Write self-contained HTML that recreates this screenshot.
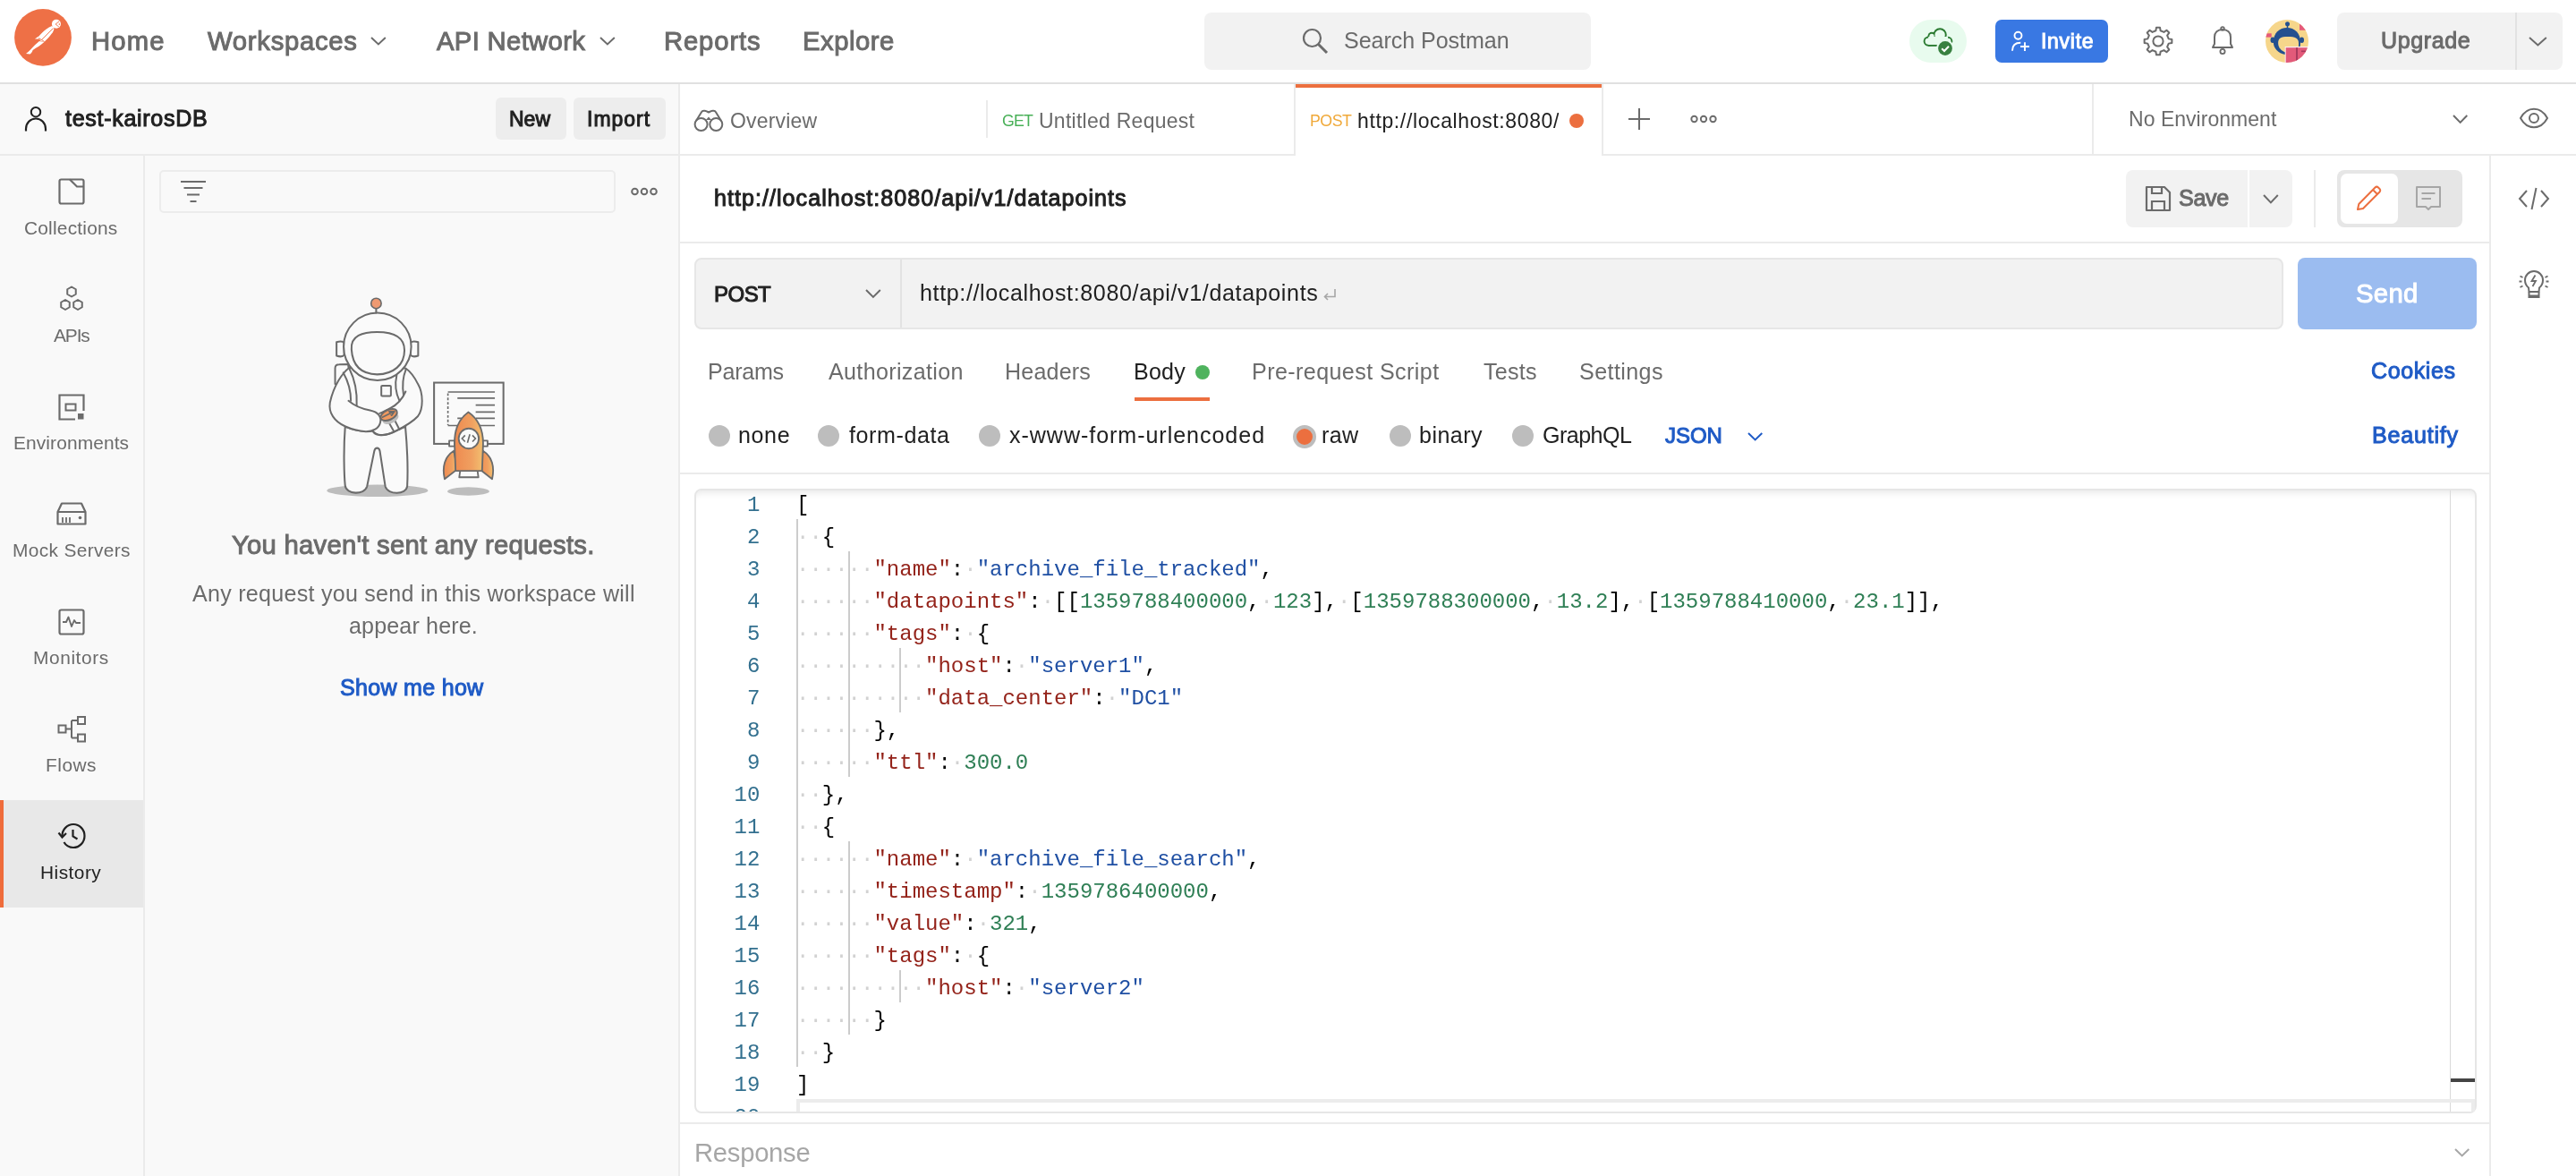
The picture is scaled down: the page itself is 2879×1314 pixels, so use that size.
<!DOCTYPE html><html><head><meta charset="utf-8"><style>
*{margin:0;padding:0;box-sizing:content-box}
html,body{width:2879px;height:1314px;overflow:hidden;background:#fff}
body{position:relative;font-family:'Liberation Sans',sans-serif}
body>div,body>span,body>svg{position:absolute}
div>div,div>span{position:absolute}
.t{position:absolute;white-space:pre;line-height:1;will-change:transform}
.ln{will-change:transform;left:0;width:71.4px;text-align:right;font-family:'Liberation Mono',monospace;font-size:24px;line-height:36px;color:#33708f;white-space:pre}
.cl{will-change:transform;left:112px;font-family:'Liberation Mono',monospace;font-size:24px;line-height:36px;white-space:pre;color:#000}
.cl span{position:static}
.ws{color:#d2d2d2}
.k{color:#94231a}
.s{color:#1f4fa3}
.n{color:#2f7f55}
.p{color:#000}
</style></head><body><div style="left:0px;top:0px;width:2879px;height:92px;background:#ffffff;"></div>
<div style="left:0px;top:92px;width:2879px;height:2px;background:#e0e0e0;"></div>
<div style="left:0px;top:94px;width:758px;height:1220px;background:#f9f9f9;"></div>
<div style="left:758px;top:94px;width:2px;height:1220px;background:#ebebeb;"></div>
<div style="left:0px;top:172px;width:758px;height:2px;background:#ebebeb;"></div>
<div style="left:160px;top:174px;width:2px;height:1140px;background:#ebebeb;"></div>
<div style="left:0px;top:894px;width:160px;height:120px;background:#e8e8e8;"></div>
<div style="left:0px;top:894px;width:4px;height:120px;background:#ef6c3b;"></div>
<svg style="left:12px;top:6px;" width="72" height="72" viewBox="0 0 1176 1176" fill="none"><circle cx="588" cy="586" r="521" fill="#ee7046"/>
<g fill="#fff">
<circle cx="832" cy="338" r="82"/>
<path d="M500 578 C560 505 655 415 728 386 C770 370 798 398 788 442 C772 505 690 592 612 668 L545 650 Z"/>
<path d="M522 655 L610 670 C560 722 470 772 402 815 C392 850 372 878 352 890 L278 882 C330 842 392 772 442 722 Z"/>
<path d="M440 612 L503 568 L526 612 Z"/>
</g>
<g stroke="#ee7046" stroke-width="15" fill="none">
<path d="M775 418 L552 640"/>
<path d="M508 596 L615 662"/>
<path d="M885 292 L818 343 L880 393"/>
</g>
<circle cx="888" cy="345" r="13" fill="#ee7046"/></svg>
<span class="t" style="left:102.4px;top:32px;font-size:29.26px;font-weight:400;color:#6b6b6b;letter-spacing:1.133px;-webkit-text-stroke:1.0px #6b6b6b;">Home</span>
<span class="t" style="left:232px;top:32px;font-size:29.26px;font-weight:400;color:#6b6b6b;letter-spacing:0.733px;-webkit-text-stroke:1.0px #6b6b6b;">Workspaces</span>
<span class="t" style="left:487.7px;top:32px;font-size:29.26px;font-weight:400;color:#6b6b6b;letter-spacing:0.33px;-webkit-text-stroke:1.0px #6b6b6b;">API Network</span>
<span class="t" style="left:741.8px;top:32px;font-size:29.26px;font-weight:400;color:#6b6b6b;letter-spacing:0.867px;-webkit-text-stroke:1.0px #6b6b6b;">Reports</span>
<span class="t" style="left:896.8px;top:32px;font-size:29.26px;font-weight:400;color:#6b6b6b;letter-spacing:0.517px;-webkit-text-stroke:1.0px #6b6b6b;">Explore</span>
<svg style="left:413.1px;top:40.199999999999996px;" width="19.8" height="11.4" viewBox="0 0 19.8 11.4" fill="none"><path d="M2 2 L9.9 9.4 L17.8 2" stroke="#6b6b6b" stroke-width="2" fill="none"/></svg>
<svg style="left:668.6px;top:40.199999999999996px;" width="19.8" height="11.4" viewBox="0 0 19.8 11.4" fill="none"><path d="M2 2 L9.9 9.4 L17.8 2" stroke="#6b6b6b" stroke-width="2" fill="none"/></svg>
<div style="left:1346px;top:14px;width:432px;height:64px;background:#f2f2f2;border-radius:8px;"></div>
<svg style="left:1454px;top:30px;" width="32" height="32" viewBox="0 0 32 32" fill="none"><circle cx="12.5" cy="12.5" r="9.5" stroke="#6b6b6b" stroke-width="2.2"/><path d="M19.5 19.5 L29 29" stroke="#6b6b6b" stroke-width="3" stroke-linecap="butt"/></svg>
<span class="t" style="left:1501.7px;top:33px;font-size:25.08px;font-weight:400;color:#6b6b6b;letter-spacing:-0.054px;">Search Postman</span>
<div style="left:2134px;top:22px;width:64px;height:48px;background:#e8fbee;border-radius:24px;"></div>
<svg style="left:2146px;top:28px;" width="42" height="40" viewBox="0 0 42 40" fill="none"><g fill="#2a7a30"><circle cx="9.2" cy="18.1" r="5.55"/><circle cx="13" cy="12.4" r="4.55"/><circle cx="22.1" cy="11" r="7.65"/><circle cx="31.1" cy="18.1" r="5.25"/><rect x="9.2" y="13" width="21.9" height="10.85"/></g>
<g fill="#e8fbee"><circle cx="9.2" cy="18.1" r="3.65"/><circle cx="13" cy="12.4" r="2.65"/><circle cx="22.1" cy="11" r="5.75"/><circle cx="31.1" cy="18.1" r="3.35"/><rect x="9.2" y="13" width="21.9" height="8.95"/></g>
<circle cx="28" cy="26" r="10" fill="#e8fbee"/>
<circle cx="28" cy="26" r="7.9" fill="#388040"/>
<path d="M24.2 26.2 L27 29 L32 23.8" stroke="#fff" stroke-width="2" fill="none"/></svg>
<div style="left:2230px;top:22px;width:126px;height:48px;background:#3978e3;border-radius:7px;"></div>
<svg style="left:2244px;top:32px;" width="26" height="26" viewBox="0 0 26 26" fill="none"><circle cx="11.5" cy="7.7" r="4" stroke="#fff" stroke-width="1.9"/><path d="M5 24.7 C5 19 8 15.8 14.3 15.8" stroke="#fff" stroke-width="1.9" fill="none"/><path d="M19 15.2 V25 M14 20 H24" stroke="#fff" stroke-width="1.9"/></svg>
<span class="t" style="left:2280.9px;top:35px;font-size:22.99px;font-weight:400;color:#ffffff;letter-spacing:0.72px;-webkit-text-stroke:1.0px #ffffff;">Invite</span>
<svg style="left:2394px;top:28px;" width="36" height="36" viewBox="0 0 36 36" fill="none"><path d="M29.71 15.38 L33.37 15.99 L33.37 20.01 L29.71 20.62 L28.13 24.43 L30.29 27.45 L27.45 30.29 L24.43 28.13 L20.62 29.71 L20.01 33.37 L15.99 33.37 L15.38 29.71 L11.57 28.13 L8.55 30.29 L5.71 27.45 L7.87 24.43 L6.29 20.62 L2.63 20.01 L2.63 15.99 L6.29 15.38 L7.87 11.57 L5.71 8.55 L8.55 5.71 L11.57 7.87 L15.38 6.29 L15.99 2.63 L20.01 2.63 L20.62 6.29 L24.43 7.87 L27.45 5.71 L30.29 8.55 L28.13 11.57 Z" stroke="#6b6b6b" stroke-width="2" stroke-linejoin="round"/><circle cx="18" cy="18" r="5.6" stroke="#6b6b6b" stroke-width="2"/></svg>
<svg style="left:2470px;top:28px;" width="28" height="36" viewBox="0 0 28 36" fill="none"><path d="M3 25 L5 21 V13.5 C5 8.3 8.5 5 14 5 C19.5 5 23 8.3 23 13.5 V21 L25 25 Z" stroke="#6b6b6b" stroke-width="2" stroke-linejoin="round"/><circle cx="14" cy="4" r="1.8" stroke="#6b6b6b" stroke-width="1.8"/><circle cx="14" cy="29.5" r="2.6" stroke="#6b6b6b" stroke-width="1.8"/></svg>
<svg style="left:2532px;top:22px;" width="48" height="48" viewBox="0 0 48 48" fill="none"><defs><clipPath id="av"><circle cx="24" cy="24" r="24"/></clipPath></defs>
<g clip-path="url(#av)"><rect width="48" height="48" fill="#f6d68b"/>
<rect x="38" y="5" width="12" height="6.8" fill="#e55a7a"/>
<rect x="0" y="15.3" width="6.7" height="4.3" fill="#e55a7a"/>
<path d="M8.8 25 C8.8 15 15.5 8.9 24 8.9 C32.5 8.9 39 15 39 25 C39 29 38.5 31 37.5 33 L22 39 C14 37.5 8.8 32 8.8 25 Z" fill="#23508f"/>
<path d="M14.1 26 C14.1 20.5 17 18.9 25 18.9 C33 18.9 37 20.5 37 26 L37 33 L23 36.8 C17.5 35 14.1 31 14.1 26 Z" fill="#f6d68b"/>
<ellipse cx="8" cy="22.7" rx="2.5" ry="3.2" fill="#23508f"/><ellipse cx="40.5" cy="22.7" rx="2.5" ry="3.2" fill="#23508f"/>
<circle cx="24.5" cy="4.8" r="2.5" fill="#23508f"/><rect x="23.7" y="5" width="1.6" height="4.5" fill="#23508f"/>
<rect x="21.7" y="30" width="30" height="20" fill="#fbeff2"/>
<rect x="22.7" y="31.2" width="30" height="20" fill="#e25a7a"/><rect x="34" y="31.2" width="2" height="20" fill="#a83a5e"/><rect x="40" y="34.5" width="5" height="1.6" fill="#a83a5e"/>
</g></svg>
<div style="left:2612px;top:14px;width:252px;height:64px;background:#f2f2f2;border-radius:8px;"></div>
<div style="left:2811px;top:14px;width:2px;height:64px;background:#e2e2e2;"></div>
<span class="t" style="left:2660.5px;top:33px;font-size:25.08px;font-weight:400;color:#6b6b6b;letter-spacing:0.583px;-webkit-text-stroke:1.0px #6b6b6b;">Upgrade</span>
<svg style="left:2824.6px;top:39.699999999999996px;" width="22.8" height="12.4" viewBox="0 0 22.8 12.4" fill="none"><path d="M2 2 L11.4 10.4 L20.8 2" stroke="#6b6b6b" stroke-width="2" fill="none"/></svg>
<svg style="left:24px;top:116px;" width="32" height="34" viewBox="0 0 32 34" fill="none"><circle cx="16" cy="9.2" r="5.2" stroke="#212121" stroke-width="2"/><path d="M5 30.5 V28 C5 21.5 10 16.5 16 16.5 C22 16.5 27 21.5 27 28 V30.5" stroke="#212121" stroke-width="2.2" fill="none"/></svg>
<span class="t" style="left:72.8px;top:120px;font-size:25.08px;font-weight:400;color:#212121;letter-spacing:0.683px;-webkit-text-stroke:1.0px #212121;">test-kairosDB</span>
<div style="left:554px;top:109px;width:79px;height:47px;background:#ededed;border-radius:6px;"></div>
<div style="left:641px;top:109px;width:103px;height:47px;background:#ededed;border-radius:6px;"></div>
<span class="t" style="left:569px;top:122px;font-size:22.99px;font-weight:400;color:#212121;letter-spacing:0.0px;-webkit-text-stroke:1.0px #212121;">New</span>
<span class="t" style="left:656px;top:122px;font-size:22.99px;font-weight:400;color:#212121;letter-spacing:1.0px;-webkit-text-stroke:1.0px #212121;">Import</span>
<div style="left:760px;top:172px;width:686px;height:2px;background:#ebebeb;"></div>
<div style="left:1792px;top:172px;width:1087px;height:2px;background:#ebebeb;"></div>
<svg style="left:774px;top:120px;" width="36" height="30" viewBox="0 0 36 30" fill="none"><circle cx="9.6" cy="19" r="7" stroke="#6b6b6b" stroke-width="2"/><circle cx="26.3" cy="19" r="7" stroke="#6b6b6b" stroke-width="2"/><path d="M4 15 L10 5.2 C11 3.6 14 3.3 16 4.5 L18 5.5 L20 4.5 C22 3.3 25 3.6 26 5.2 L32 15" stroke="#6b6b6b" stroke-width="2" fill="none" stroke-linejoin="round"/><path d="M15 14 L18 10.5 L21 14 Z" fill="#6b6b6b"/></svg>
<span class="t" style="left:815.8px;top:124px;font-size:22.99px;font-weight:400;color:#6b6b6b;letter-spacing:0.171px;">Overview</span>
<div style="left:1102px;top:112px;width:2px;height:42px;background:#ebebeb;"></div>
<span class="t" style="left:1119.6px;top:127px;font-size:17.77px;font-weight:400;color:#49b058;letter-spacing:-0.8px;">GET</span>
<span class="t" style="left:1161px;top:124px;font-size:22.99px;font-weight:400;color:#6b6b6b;letter-spacing:0.267px;">Untitled Request</span>
<div style="left:1446px;top:94px;width:2px;height:80px;background:#ebebeb;"></div>
<div style="left:1790px;top:94px;width:2px;height:80px;background:#ebebeb;"></div>
<div style="left:1448px;top:94px;width:342px;height:4px;background:#ec6f3f;"></div>
<span class="t" style="left:1463.5px;top:127px;font-size:17.77px;font-weight:400;color:#f0a93a;letter-spacing:-0.5px;">POST</span>
<div style="left:1500px;top:100px;width:242px;height:70px;overflow:hidden;"><span class="t" style="left:17.40000000000009px;top:24px;font-size:22.99px;font-weight:400;color:#212121;letter-spacing:0.63px">http://localhost:8080/api/v1/datapoints</span></div>
<svg style="left:1752px;top:125px;" width="20" height="20" viewBox="0 0 20 20" fill="none"><circle cx="10" cy="10" r="8" fill="#ec6f3f"/></svg>
<svg style="left:1818px;top:119px;" width="28" height="28" viewBox="0 0 28 28" fill="none"><path d="M14 2 V26 M2 14 H26" stroke="#6b6b6b" stroke-width="2"/></svg>
<svg style="left:1888px;top:127px;" width="32" height="12" viewBox="0 0 32 12" fill="none"><circle cx="5.5" cy="6" r="3.2" stroke="#6b6b6b" stroke-width="1.9"/><circle cx="16" cy="6" r="3.2" stroke="#6b6b6b" stroke-width="1.9"/><circle cx="26.5" cy="6" r="3.2" stroke="#6b6b6b" stroke-width="1.9"/></svg>
<div style="left:2338px;top:94px;width:2px;height:78px;background:#ebebeb;"></div>
<span class="t" style="left:2379px;top:122px;font-size:22.99px;font-weight:400;color:#6b6b6b;letter-spacing:0.038px;">No Environment</span>
<svg style="left:2740.35px;top:126.75000000000003px;" width="19.3" height="11.9" viewBox="0 0 19.3 11.9" fill="none"><path d="M2 2 L9.65 9.9 L17.3 2" stroke="#6b6b6b" stroke-width="2" fill="none"/></svg>
<svg style="left:2814px;top:118px;" width="36" height="28" viewBox="0 0 36 28" fill="none"><path d="M3 14 C6.5 7.5 11.5 3.8 18 3.8 C24.5 3.8 29.5 7.5 33 14 C29.5 20.5 24.5 24.2 18 24.2 C11.5 24.2 6.5 20.5 3 14 Z" stroke="#6b6b6b" stroke-width="2"/><circle cx="18" cy="14" r="5" stroke="#6b6b6b" stroke-width="2"/></svg>
<div style="left:2782px;top:174px;width:2px;height:1140px;background:#ebebeb;"></div>
<svg style="left:2812px;top:206px;" width="40" height="32" viewBox="0 0 40 32" fill="none"><path d="M12 7 L4 16 L12 25 M28 7 L36 16 L28 25 M22.5 4 L17.5 28" stroke="#6b6b6b" stroke-width="2" fill="none"/></svg>
<svg style="left:2812px;top:298px;" width="40" height="40" viewBox="0 0 40 40" fill="none"><path d="M14 23.5 C11.5 21.5 10 18.5 10 15 C10 9.5 14.5 5 20 5 C25.5 5 30 9.5 30 15 C30 18.5 28.5 21.5 26 23.5 L25.5 28 H14.5 Z" stroke="#6b6b6b" stroke-width="2" stroke-linejoin="round"/>
<path d="M21.5 9.5 L17.5 16 H22 L18.5 22" stroke="#6b6b6b" stroke-width="1.8" fill="none"/>
<path d="M14.5 28 V34 H25.5 V28" stroke="#6b6b6b" stroke-width="2" fill="none"/><rect x="14.5" y="31.5" width="11" height="3.5" fill="#6b6b6b"/>
<path d="M4.5 10.5 L7.5 12 M3.5 16.5 H6.5 M4.5 23 L7.5 21.5 M35.5 10.5 L32.5 12 M36.5 16.5 H33.5 M35.5 23 L32.5 21.5" stroke="#6b6b6b" stroke-width="1.8"/></svg>
<div style="left:760px;top:270px;width:2022px;height:2px;background:#ebebeb;"></div>
<span class="t" style="left:797.5px;top:209px;font-size:25.08px;font-weight:400;color:#212121;letter-spacing:1.039px;-webkit-text-stroke:1.0px #212121;">http://localhost:8080/api/v1/datapoints</span>
<div style="left:2376px;top:190px;width:136px;height:64px;background:#f2f2f2;border-radius:8px 0 0 8px;"></div>
<div style="left:2514px;top:190px;width:48px;height:64px;background:#f2f2f2;border-radius:0 8px 8px 0;"></div>
<svg style="left:2396px;top:206px;" width="32" height="32" viewBox="0 0 32 32" fill="none"><path d="M3 3 H23 L29 9 V29 H3 Z" stroke="#6b6b6b" stroke-width="2.2" stroke-linejoin="round"/><path d="M9 3.5 V10 H20 V3.5" stroke="#6b6b6b" stroke-width="2.2"/><path d="M9 28.5 V19 H23 V28.5" stroke="#6b6b6b" stroke-width="2.2"/></svg>
<span class="t" style="left:2435.4px;top:209px;font-size:25.08px;font-weight:400;color:#6b6b6b;letter-spacing:-0.3px;-webkit-text-stroke:1.0px #6b6b6b;">Save</span>
<svg style="left:2527.6px;top:215.9px;" width="19.8" height="12.4" viewBox="0 0 19.8 12.4" fill="none"><path d="M2 2 L9.9 10.4 L17.8 2" stroke="#6b6b6b" stroke-width="2" fill="none"/></svg>
<div style="left:2586px;top:190px;width:2px;height:64px;background:#ebebeb;"></div>
<div style="left:2612px;top:190px;width:140px;height:64px;background:#e6e6e6;border-radius:8px;"></div>
<div style="left:2616px;top:194px;width:64px;height:56px;background:#ffffff;border-radius:7px;"></div>
<svg style="left:2630px;top:204px;" width="36" height="36" viewBox="0 0 36 36" fill="none"><path d="M5 30 L6.3 24 L24.5 5.5 C25.5 4.5 27 4.5 28 5.5 L29.5 7 C30.5 8 30.5 9.5 29.5 10.5 L11 29 Z M22 8 L27 13" stroke="#ec6f3f" stroke-width="2" stroke-linejoin="round" fill="none"/></svg>
<svg style="left:2698px;top:206px;" width="32" height="34" viewBox="0 0 32 34" fill="none"><path d="M3 3 H29 V25 H19 L16 28 L13 25 H3 Z" stroke="#a6a6a6" stroke-width="2" stroke-linejoin="round"/><path d="M8.5 10 H23.5 M8.5 16 H19" stroke="#a6a6a6" stroke-width="2"/></svg>
<div style="left:776px;top:288px;width:1776px;height:80px;background:#f2f2f2;border:2px solid #e6e6e6;border-radius:8px;box-sizing:border-box;"></div>
<div style="left:1006px;top:290px;width:2px;height:76px;background:#e2e2e2;"></div>
<span class="t" style="left:797.5px;top:317px;font-size:24.03px;font-weight:400;color:#212121;letter-spacing:-0.533px;-webkit-text-stroke:1.0px #212121;">POST</span>
<svg style="left:965.9px;top:321.75px;" width="19.8" height="11.9" viewBox="0 0 19.8 11.9" fill="none"><path d="M2 2 L9.9 9.9 L17.8 2" stroke="#6b6b6b" stroke-width="2" fill="none"/></svg>
<span class="t" style="left:1027.6px;top:315px;font-size:25.08px;font-weight:400;color:#212121;letter-spacing:0.624px;">http://localhost:8080/api/v1/datapoints</span>
<svg style="left:1477px;top:320px;" width="18" height="18" viewBox="0 0 18 18" fill="none"><path d="M15 3 V11.5 H3.5 M7 8 L3.5 11.5 L7 15" stroke="#a6a6a6" stroke-width="1.6" fill="none"/></svg>
<div style="left:2568px;top:288px;width:200px;height:80px;background:#9bbcf0;border-radius:8px;"></div>
<span class="t" style="left:2633.4px;top:314px;font-size:29.26px;font-weight:400;color:#ffffff;letter-spacing:0.333px;-webkit-text-stroke:1.0px #ffffff;">Send</span>
<span class="t" style="left:790.9px;top:403px;font-size:25.08px;font-weight:400;color:#6b6b6b;letter-spacing:-0.26px;">Params</span>
<span class="t" style="left:926px;top:403px;font-size:25.08px;font-weight:400;color:#6b6b6b;letter-spacing:0.333px;">Authorization</span>
<span class="t" style="left:1123.3px;top:403px;font-size:25.08px;font-weight:400;color:#6b6b6b;letter-spacing:0.183px;">Headers</span>
<span class="t" style="left:1266.9px;top:403px;font-size:25.08px;font-weight:400;color:#212121;letter-spacing:0.2px;">Body</span>
<span class="t" style="left:1399px;top:403px;font-size:25.08px;font-weight:400;color:#6b6b6b;letter-spacing:0.412px;">Pre-request Script</span>
<span class="t" style="left:1657.8px;top:403px;font-size:25.08px;font-weight:400;color:#6b6b6b;letter-spacing:0.225px;">Tests</span>
<span class="t" style="left:1765.4px;top:403px;font-size:25.08px;font-weight:400;color:#6b6b6b;letter-spacing:0.414px;">Settings</span>
<span class="t" style="left:2649.6px;top:402px;font-size:25.08px;font-weight:400;color:#1f5bc6;letter-spacing:0.567px;-webkit-text-stroke:1.0px #1f5bc6;">Cookies</span>
<svg style="left:1334px;top:406px;" width="20" height="20" viewBox="0 0 20 20" fill="none"><circle cx="10" cy="10" r="8" fill="#4fb35e"/></svg>
<div style="left:1268px;top:444px;width:84px;height:4px;background:#ec6f3f;"></div>
<svg style="left:791px;top:474px;" width="26" height="26" viewBox="0 0 26 26" fill="none"><circle cx="13" cy="13" r="12" fill="#bdbdbd"/></svg>
<svg style="left:913px;top:474px;" width="26" height="26" viewBox="0 0 26 26" fill="none"><circle cx="13" cy="13" r="12" fill="#bdbdbd"/></svg>
<svg style="left:1093px;top:474px;" width="26" height="26" viewBox="0 0 26 26" fill="none"><circle cx="13" cy="13" r="12" fill="#bdbdbd"/></svg>
<svg style="left:1445px;top:475px;" width="26" height="26" viewBox="0 0 26 26" fill="none"><circle cx="13" cy="13" r="11" fill="#ec6f3f" stroke="#bdbdbd" stroke-width="4"/></svg>
<svg style="left:1552px;top:474px;" width="26" height="26" viewBox="0 0 26 26" fill="none"><circle cx="13" cy="13" r="12" fill="#bdbdbd"/></svg>
<svg style="left:1689px;top:474px;" width="26" height="26" viewBox="0 0 26 26" fill="none"><circle cx="13" cy="13" r="12" fill="#bdbdbd"/></svg>
<span class="t" style="left:825px;top:474px;font-size:25.08px;font-weight:400;color:#212121;letter-spacing:0.6px;">none</span>
<span class="t" style="left:949.4px;top:474px;font-size:25.08px;font-weight:400;color:#212121;letter-spacing:0.575px;">form-data</span>
<span class="t" style="left:1128px;top:474px;font-size:25.08px;font-weight:400;color:#212121;letter-spacing:0.945px;">x-www-form-urlencoded</span>
<span class="t" style="left:1477.4px;top:474px;font-size:25.08px;font-weight:400;color:#212121;letter-spacing:0.4px;">raw</span>
<span class="t" style="left:1586px;top:474px;font-size:25.08px;font-weight:400;color:#212121;letter-spacing:0.46px;">binary</span>
<span class="t" style="left:1723.7px;top:474px;font-size:25.08px;font-weight:400;color:#212121;letter-spacing:-0.533px;">GraphQL</span>
<span class="t" style="left:1861.3px;top:475px;font-size:24.03px;font-weight:400;color:#1f5bc6;letter-spacing:-0.033px;-webkit-text-stroke:1.0px #1f5bc6;">JSON</span>
<span class="t" style="left:2650.8px;top:474px;font-size:25.08px;font-weight:400;color:#1f5bc6;letter-spacing:0.786px;-webkit-text-stroke:1.0px #1f5bc6;">Beautify</span>
<svg style="left:1952.1499999999999px;top:482.2px;" width="19.3" height="11.4" viewBox="0 0 19.3 11.4" fill="none"><path d="M2 2 L9.65 9.4 L17.3 2" stroke="#1f5bc6" stroke-width="2" fill="none"/></svg>
<div style="left:760px;top:528px;width:2022px;height:2px;background:#ebebeb;"></div>
<svg style="left:62px;top:196px;" width="36" height="36" viewBox="0 0 36 36" fill="none"><rect x="4.5" y="4.5" width="27" height="27" rx="2" stroke="#6b6b6b" stroke-width="2.2"/><path d="M16 4.5 L24 12.5 H31.5" stroke="#6b6b6b" stroke-width="2.2" fill="none"/></svg>
<span class="t" style="left:27.3px;top:245px;font-size:20.9px;font-weight:400;color:#6b6b6b;letter-spacing:0.21px;">Collections</span>
<svg style="left:62px;top:318px;" width="36" height="32" viewBox="0 0 36 32" fill="none"><path d="M18.00 13.50 L13.24 10.75 L13.24 5.25 L18.00 2.50 L22.76 5.25 L22.76 10.75 Z M11.00 28.00 L6.24 25.25 L6.24 19.75 L11.00 17.00 L15.76 19.75 L15.76 25.25 Z M25.00 28.00 L20.24 25.25 L20.24 19.75 L25.00 17.00 L29.76 19.75 L29.76 25.25 Z" stroke="#6b6b6b" stroke-width="2" stroke-linejoin="round"/></svg>
<span class="t" style="left:59.5px;top:365px;font-size:20.9px;font-weight:400;color:#6b6b6b;letter-spacing:-1.1px;">APIs</span>
<svg style="left:62px;top:437px;" width="36" height="34" viewBox="0 0 36 34" fill="none"><path d="M31.5 22 V4.5 H4.5 V31.5 H22" stroke="#6b6b6b" stroke-width="2.2" fill="none"/><rect x="11.5" y="14.5" width="11" height="7" stroke="#6b6b6b" stroke-width="2"/><rect x="25" y="25" width="6.5" height="6.5" fill="#6b6b6b"/></svg>
<span class="t" style="left:15px;top:485px;font-size:20.9px;font-weight:400;color:#6b6b6b;letter-spacing:0.118px;">Environments</span>
<svg style="left:60px;top:558px;" width="40" height="32" viewBox="0 0 40 32" fill="none"><path d="M4.5 14 L9 4.5 H31 L35.5 14 V27.5 H4.5 Z M4.5 14 H35.5" stroke="#6b6b6b" stroke-width="2.2" stroke-linejoin="round" fill="none"/><path d="M10 20 V26 M14 20 V26 M18 20 V26" stroke="#6b6b6b" stroke-width="1.8"/><circle cx="29.5" cy="20.5" r="1.8" fill="#6b6b6b"/></svg>
<span class="t" style="left:13.8px;top:605px;font-size:20.9px;font-weight:400;color:#6b6b6b;letter-spacing:0.345px;">Mock Servers</span>
<svg style="left:62px;top:677px;" width="36" height="36" viewBox="0 0 36 36" fill="none"><rect x="4.5" y="4.5" width="27" height="27" rx="2" stroke="#6b6b6b" stroke-width="2.2"/><path d="M8 18 H12 L14.5 12.5 L18 23 L21 16 L23 19 H28" stroke="#6b6b6b" stroke-width="1.9" fill="none" stroke-linejoin="round"/></svg>
<span class="t" style="left:36.75px;top:725px;font-size:20.9px;font-weight:400;color:#6b6b6b;letter-spacing:0.579px;">Monitors</span>
<svg style="left:61px;top:797px;" width="40" height="36" viewBox="0 0 40 36" fill="none"><rect x="4.5" y="13.5" width="8" height="8" stroke="#6b6b6b" stroke-width="2"/><rect x="26" y="4" width="8" height="8" stroke="#6b6b6b" stroke-width="2"/><rect x="26" y="23.5" width="8" height="8" stroke="#6b6b6b" stroke-width="2"/><path d="M12.5 17.5 H19 M19 8 V27.5 M19 8 H26 M19 27.5 H26" stroke="#6b6b6b" stroke-width="2" fill="none"/></svg>
<span class="t" style="left:51px;top:845px;font-size:20.9px;font-weight:400;color:#6b6b6b;letter-spacing:0.5px;">Flows</span>
<svg style="left:62px;top:916px;" width="36" height="36" viewBox="0 0 36 36" fill="none"><path d="M7.5 18 C7.5 11 13 5 20 5 C27 5 32.5 11 32.5 18 C32.5 25 27 31 20 31 C15.5 31 11.5 28.5 9.5 25" stroke="#212121" stroke-width="2.2" fill="none"/><path d="M3.5 14.5 L7.5 19.5 L12 15" stroke="#212121" stroke-width="2.2" fill="none"/><path d="M19.5 11 V18.5 L24.5 21.5" stroke="#212121" stroke-width="2.2" fill="none"/></svg>
<span class="t" style="left:44.7px;top:965px;font-size:20.9px;font-weight:400;color:#212121;letter-spacing:0.467px;">History</span>
<div style="left:178px;top:190px;width:510px;height:48px;background:transparent;border:2px solid #ececec;border-radius:5px;box-sizing:border-box;"></div>
<svg style="left:200px;top:198px;" width="34" height="32" viewBox="0 0 34 32" fill="none"><path d="M2 5 H30 M5.5 12 H26.5 M9 19.5 H23 M12.5 27 H19.5" stroke="#6b6b6b" stroke-width="2.2"/></svg>
<svg style="left:702px;top:206px;" width="36" height="16" viewBox="0 0 36 16" fill="none"><circle cx="7.5" cy="8" r="3.3" stroke="#6b6b6b" stroke-width="2"/><circle cx="18" cy="8" r="3.3" stroke="#6b6b6b" stroke-width="2"/><circle cx="28.5" cy="8" r="3.3" stroke="#6b6b6b" stroke-width="2"/></svg>
<svg style="left:350px;top:320px;" width="230" height="240" viewBox="0 0 1127 1176" fill="none">
<ellipse cx="352" cy="1118" rx="277" ry="33" fill="#bdbdbd"/>
<ellipse cx="850" cy="1122" rx="115" ry="23" fill="#bdbdbd"/>
<g stroke="#6b6b6b" stroke-width="10" fill="#fafafa" stroke-linejoin="round" stroke-linecap="round">
<g transform="translate(49 392) scale(0.3749)" stroke-width="26">
<path d="M190 380 L190 150 C190 110 215 95 250 95 L380 92 L420 400 Z"/>
</g>
<path d="M175 770 C165 900 170 1040 175 1090 C180 1140 280 1145 295 1095 L335 900 C340 880 360 880 365 900 L395 1095 C410 1145 510 1140 515 1095 C520 1000 515 880 505 770 Z"/>
<g transform="translate(49 392) scale(0.3749)" stroke-width="26">
<path d="M400 140 C300 210 170 400 115 650 C90 800 180 930 340 1000 C450 1050 600 1080 740 1065 C790 1130 900 1150 1040 1085 C1150 1030 1300 960 1400 850 C1480 740 1480 520 1400 380 C1340 260 1280 190 1220 150 Z"/>
<path d="M310 215 C380 340 420 470 420 625 M400 160 C470 300 515 450 505 690 M1090 250 C1060 380 1070 500 1130 625 M1225 165 C1170 300 1170 420 1190 545" fill="none"/>
<rect x="865" y="405" width="140" height="150" rx="14"/>
<path d="M1220 490 C1180 580 1100 680 1000 730 C930 770 880 790 840 810" fill="none"/>
<path d="M385 625 C450 680 560 740 700 765 C820 790 870 860 850 940 C830 1030 740 1075 640 1075 C520 1065 430 1040 340 1000" fill="#fafafa"/>
<path d="M960 915 L1050 1075 M1045 880 L1130 1045" fill="none"/>
<ellipse cx="1000" cy="885" rx="125" ry="70" transform="rotate(-25 1000 885)" fill="#bdbdbd" stroke="none"/>
<ellipse cx="975" cy="830" rx="128" ry="72" transform="rotate(-25 975 830)" fill="#f0995f"/>
<path d="M880 865 L1030 790 M980 778 L1058 782 L1015 838 Z" fill="none" stroke-width="22"/>
<path d="M740 1065 C770 1130 880 1150 1000 1100 C1080 1065 1150 1030 1220 1000" fill="none"/>
</g>
<path d="M128 305 C128 305 160 295 170 310 L170 375 C160 390 128 380 128 380 Z"/>
<path d="M575 305 C575 305 543 295 533 310 L533 375 C543 390 575 380 575 380 Z"/>
<circle cx="352" cy="330" r="185"/>
<path d="M210 345 C205 270 270 250 350 250 C440 250 500 280 500 350 C500 430 440 480 350 482 C260 480 215 430 210 345 Z"/>
<path d="M345 120 V145" fill="none"/>
</g>
<circle cx="345" cy="93" r="28" fill="#ef9a72" stroke="#6b6b6b" stroke-width="8"/>
<g stroke="#6b6b6b" stroke-width="10">
<rect x="662" y="527" width="380" height="335" fill="#fafafa"/>
<path d="M738 578 H995 M790 612 H995 M890 650 H995 M890 688 H995 M890 722 H995 M790 722 H850 M738 762 H995" stroke-width="8" fill="none"/>
<path d="M738 585 V760" stroke-width="8" stroke-dasharray="14 10" fill="none"/>
</g>
<defs><linearGradient id="rg" x1="0" x2="1"><stop offset="0" stop-color="#ee8a50"/><stop offset="0.6" stop-color="#f0a060"/><stop offset="1" stop-color="#f2c070"/></linearGradient></defs>
<g stroke="#6b6b6b" stroke-width="9" stroke-linejoin="round">
<path d="M770 900 C720 930 705 990 720 1055 L790 1000 Z" fill="url(#rg)"/>
<path d="M930 900 C980 930 995 990 980 1055 L910 1000 Z" fill="url(#rg)"/>
<rect x="745" y="845" width="30" height="30" fill="#fafafa"/>
<rect x="925" y="845" width="30" height="30" fill="#fafafa"/>
<path d="M805 1010 L800 1045 H905 L900 1010 Z" fill="#fafafa"/>
<path d="M850 688 C790 730 770 800 775 880 L780 1010 H925 L930 880 C935 800 910 730 850 688 Z" fill="url(#rg)"/>
<circle cx="852" cy="833" r="55" fill="#fafafa"/>
</g>
<path d="M832 815 L815 833 L832 850 M872 815 L889 833 L872 850 M858 810 L845 856" stroke="#6b6b6b" stroke-width="8" fill="none"/>
</svg>
<span class="t" style="left:259px;top:595px;font-size:29.26px;font-weight:400;color:#6b6b6b;letter-spacing:0.252px;-webkit-text-stroke:1.0px #6b6b6b;">You haven't sent any requests.</span>
<span class="t" style="left:214.5px;top:651px;font-size:25.08px;font-weight:400;color:#6b6b6b;letter-spacing:0.257px;">Any request you send in this workspace will</span>
<span class="t" style="left:389.8px;top:687px;font-size:25.08px;font-weight:400;color:#6b6b6b;letter-spacing:0.145px;">appear here.</span>
<span class="t" style="left:380px;top:756px;font-size:25.08px;font-weight:400;color:#1f5bc6;letter-spacing:0.27px;-webkit-text-stroke:1.0px #1f5bc6;">Show me how</span>
<div style="left:776px;top:546px;width:1992px;height:698px;background:#ffffff;border:2px solid #e6e6e6;border-radius:8px;box-sizing:border-box;box-shadow:inset 0 10px 8px -8px rgba(0,0,0,0.10);"></div>
<div style="left:2738px;top:548px;width:1px;height:694px;background:#dadada;"></div>
<div style="left:2739px;top:1205px;width:27px;height:4px;background:#444444;"></div>
<div style="left:778px;top:548px;width:1960px;height:694px;overflow:hidden;">
<div class="ln" style="top:-1px;">1</div>
<div class="cl" style="top:-1px;"><span class="p">[</span></div>
<div class="ln" style="top:35px;">2</div>
<div class="cl" style="top:35px;"><span class="ws">··</span><span class="p">{</span></div>
<div class="ln" style="top:71px;">3</div>
<div class="cl" style="top:71px;"><span class="ws">······</span><span class="k">"name"</span><span class="p">:</span><span class="ws">·</span><span class="s">"archive_file_tracked"</span><span class="p">,</span></div>
<div class="ln" style="top:107px;">4</div>
<div class="cl" style="top:107px;"><span class="ws">······</span><span class="k">"datapoints"</span><span class="p">:</span><span class="ws">·</span><span class="p">[[</span><span class="n">1359788400000</span><span class="p">,</span><span class="ws">·</span><span class="n">123</span><span class="p">],</span><span class="ws">·</span><span class="p">[</span><span class="n">1359788300000</span><span class="p">,</span><span class="ws">·</span><span class="n">13.2</span><span class="p">],</span><span class="ws">·</span><span class="p">[</span><span class="n">1359788410000</span><span class="p">,</span><span class="ws">·</span><span class="n">23.1</span><span class="p">]],</span></div>
<div class="ln" style="top:143px;">5</div>
<div class="cl" style="top:143px;"><span class="ws">······</span><span class="k">"tags"</span><span class="p">:</span><span class="ws">·</span><span class="p">{</span></div>
<div class="ln" style="top:179px;">6</div>
<div class="cl" style="top:179px;"><span class="ws">··········</span><span class="k">"host"</span><span class="p">:</span><span class="ws">·</span><span class="s">"server1"</span><span class="p">,</span></div>
<div class="ln" style="top:215px;">7</div>
<div class="cl" style="top:215px;"><span class="ws">··········</span><span class="k">"data_center"</span><span class="p">:</span><span class="ws">·</span><span class="s">"DC1"</span></div>
<div class="ln" style="top:251px;">8</div>
<div class="cl" style="top:251px;"><span class="ws">······</span><span class="p">},</span></div>
<div class="ln" style="top:287px;">9</div>
<div class="cl" style="top:287px;"><span class="ws">······</span><span class="k">"ttl"</span><span class="p">:</span><span class="ws">·</span><span class="n">300.0</span></div>
<div class="ln" style="top:323px;">10</div>
<div class="cl" style="top:323px;"><span class="ws">··</span><span class="p">},</span></div>
<div class="ln" style="top:359px;">11</div>
<div class="cl" style="top:359px;"><span class="ws">··</span><span class="p">{</span></div>
<div class="ln" style="top:395px;">12</div>
<div class="cl" style="top:395px;"><span class="ws">······</span><span class="k">"name"</span><span class="p">:</span><span class="ws">·</span><span class="s">"archive_file_search"</span><span class="p">,</span></div>
<div class="ln" style="top:431px;">13</div>
<div class="cl" style="top:431px;"><span class="ws">······</span><span class="k">"timestamp"</span><span class="p">:</span><span class="ws">·</span><span class="n">1359786400000</span><span class="p">,</span></div>
<div class="ln" style="top:467px;">14</div>
<div class="cl" style="top:467px;"><span class="ws">······</span><span class="k">"value"</span><span class="p">:</span><span class="ws">·</span><span class="n">321</span><span class="p">,</span></div>
<div class="ln" style="top:503px;">15</div>
<div class="cl" style="top:503px;"><span class="ws">······</span><span class="k">"tags"</span><span class="p">:</span><span class="ws">·</span><span class="p">{</span></div>
<div class="ln" style="top:539px;">16</div>
<div class="cl" style="top:539px;"><span class="ws">··········</span><span class="k">"host"</span><span class="p">:</span><span class="ws">·</span><span class="s">"server2"</span></div>
<div class="ln" style="top:575px;">17</div>
<div class="cl" style="top:575px;"><span class="ws">······</span><span class="p">}</span></div>
<div class="ln" style="top:611px;">18</div>
<div class="cl" style="top:611px;"><span class="ws">··</span><span class="p">}</span></div>
<div class="ln" style="top:647px;">19</div>
<div class="cl" style="top:647px;"><span class="p">]</span></div>
<div class="ln" style="top:683px;">20</div>
<div class="cl" style="top:683px;"><span class="p"></span></div>
<div style="left:112.0px;top:32px;width:2px;height:612px;background:#cccccc"></div>
<div style="left:169.60000000000002px;top:68px;width:2px;height:252px;background:#cccccc"></div>
<div style="left:169.60000000000002px;top:392px;width:2px;height:216px;background:#cccccc"></div>
<div style="left:227.20000000000005px;top:176px;width:2px;height:72px;background:#cccccc"></div>
<div style="left:227.20000000000005px;top:536px;width:2px;height:36px;background:#cccccc"></div>
</div>
<div style="left:890px;top:1228px;width:1876px;height:14px;background:#ececec;"></div>
<div style="left:894px;top:1232px;width:1868px;height:10px;background:#ffffff;"></div>
<div style="left:2738px;top:1232px;width:1px;height:10px;background:#dadada;"></div>
<div style="left:760px;top:1254px;width:2022px;height:2px;background:#ebebeb;"></div>
<span class="t" style="left:775.7px;top:1274px;font-size:29.26px;font-weight:400;color:#a6a6a6;letter-spacing:-0.286px;">Response</span>
<svg style="left:2742.35px;top:1282.0px;" width="19.3" height="11.4" viewBox="0 0 19.3 11.4" fill="none"><path d="M2 2 L9.65 9.4 L17.3 2" stroke="#a6a6a6" stroke-width="2" fill="none"/></svg></body></html>
